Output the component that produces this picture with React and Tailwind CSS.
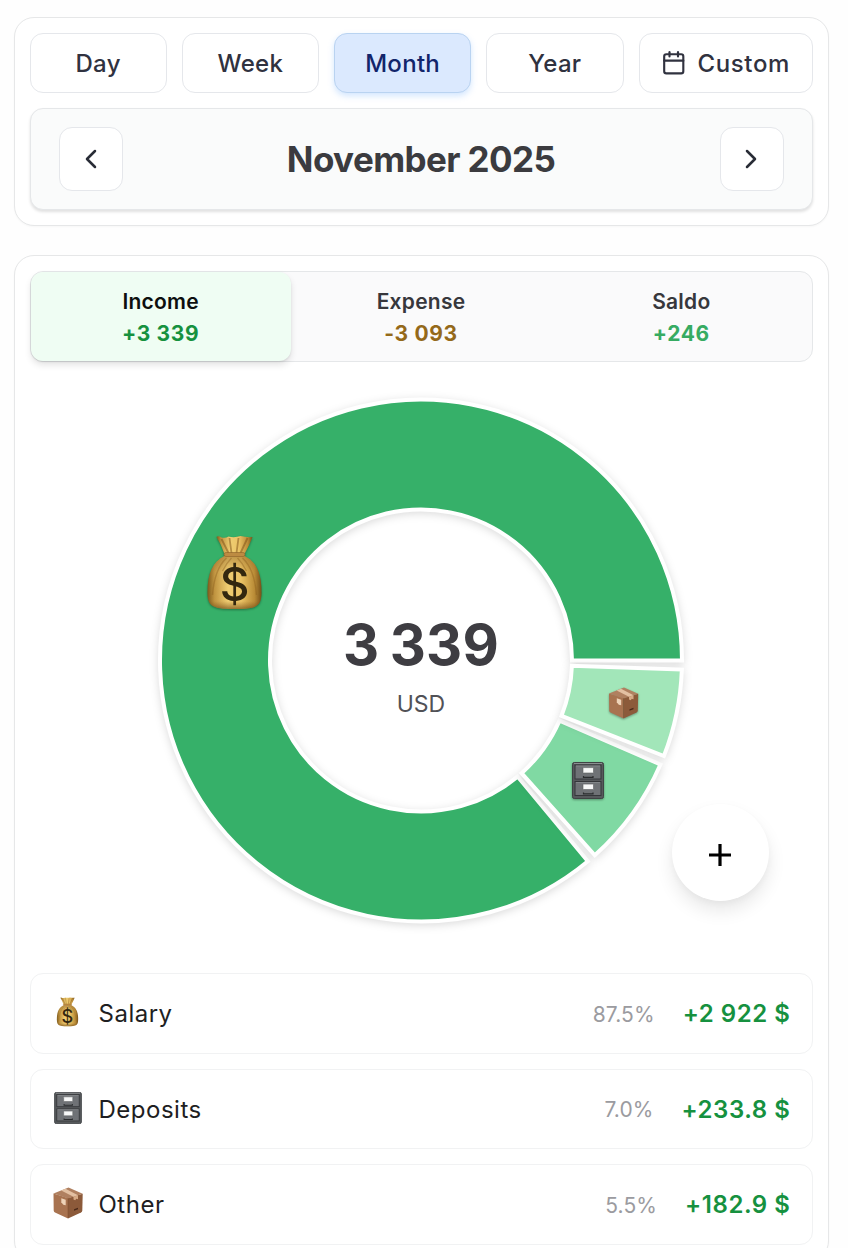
import { useState } from "react";
import { Calendar, ChevronLeft, ChevronRight } from "lucide-react";

const periods = ["Day", "Week", "Month", "Year"];

const totals = [
    { id: "income", label: "Income", value: "+3 339", color: "text-[#16913f]" },
    { id: "expense", label: "Expense", value: "-3 093", color: "text-[#94691a]" },
    { id: "saldo", label: "Saldo", value: "+246", color: "text-[#36ab62]" },
];

const categories = [
    { name: "Salary", icon: "bag", share: 87.5, amount: "+2 922 $", fill: "#36b069" },
    { name: "Deposits", icon: "cabinet", share: 7.0, amount: "+233.8 $", fill: "#80d9a3" },
    { name: "Other", icon: "box", share: 5.5, amount: "+182.9 $", fill: "#a2e6b9" },
];

function MoneyBag(props) {
    return (
        <svg viewBox="0 0 56 76" {...props}>
            <defs>
                <linearGradient id="bagBody" x1="0" x2="1" y1="0" y2="0">
                    <stop offset="0" stopColor="#7d5a1c" />
                    <stop offset="0.13" stopColor="#c09440" />
                    <stop offset="0.38" stopColor="#efcd72" />
                    <stop offset="0.62" stopColor="#ebc365" />
                    <stop offset="0.87" stopColor="#b98b36" />
                    <stop offset="1" stopColor="#765018" />
                </linearGradient>
                <linearGradient id="bagShade" x1="0" x2="0" y1="0" y2="1">
                    <stop offset="0" stopColor="#7a4a12" stopOpacity="0.4" />
                    <stop offset="0.3" stopColor="#7a4a12" stopOpacity="0" />
                    <stop offset="0.85" stopColor="#7a4a12" stopOpacity="0" />
                    <stop offset="1" stopColor="#5c370b" stopOpacity="0.6" />
                </linearGradient>
            </defs>
            <path d="M10 2Q12 0.5 15 2.5Q19 3.5 22 1.5Q28 3 34 1Q40 2.5 46 2Q43 10 38 19H18Q15 10 10 2Z" fill="url(#bagBody)" />
            <path d="M15 4L22 18M23 3L25 18M32 3L30 18M41 3L34 18" stroke="#7b4d16" strokeWidth="1.8" opacity="0.5" fill="none" />
            <path d="M18 21C6 27 1 38 1 57C1 71 5 74 28 74C51 74 55 71 55 57C55 38 50 27 38 21Z" fill="url(#bagBody)" />
            <path d="M18 21C6 27 1 38 1 57C1 71 5 74 28 74C51 74 55 71 55 57C55 38 50 27 38 21Z" fill="url(#bagShade)" />
            <path d="M20 23Q8 34 6 60M25 23Q20 28 16 36M31 23Q36 28 40 36M36 23Q48 34 50 60" stroke="#8a5c1b" strokeWidth="1.4" opacity="0.4" fill="none" />
            <rect x="17.5" y="17.5" width="21" height="4" rx="2" fill="#bd8b42" stroke="#8c6028" strokeWidth="0.6" />
            <text x="28" y="65.5" textAnchor="middle" fontSize="46" fontWeight="500" fontFamily="Inter, sans-serif" fill="#33270f">$</text>
        </svg>
    );
}

function Cabinet(props) {
    return (
        <svg viewBox="0 0 32 37" {...props}>
            <rect x="0.5" y="0.5" width="31" height="36" rx="1.8" fill="#56595c" stroke="#404345" />
            <path d="M2 1.5H30" stroke="#8b8e90" strokeWidth="1" />
            {[3, 19.5].map((y) => (
                <g key={y} transform={`translate(3 ${y})`}>
                    <rect width="26" height="14" fill="#6f7276" stroke="#35373a" strokeWidth="1" />
                    <path d="M1 1H25" stroke="#888b8e" strokeWidth="0.8" />
                    <rect x="8" y="2.6" width="10.5" height="5.4" rx="0.6" fill="#f7f8f8" stroke="#5c5e60" strokeWidth="0.6" />
                    <path d="M8.5 11V12.3H18V11" stroke="#2a2c2e" strokeWidth="1.2" fill="none" />
                </g>
            ))}
        </svg>
    );
}

function Package(props) {
    return (
        <svg viewBox="0 0 30 32" {...props}>
            <path d="M0.5 6.5L15 11V31.5L2 25.5Q0.8 25 0.7 23.5Z" fill="#a87350" />
            <path d="M15 11L29.7 6.8L29.3 23.5Q29.2 25 28 25.6L15 31.5Z" fill="#8c5a3a" />
            <path d="M0.5 6.5L15.5 0.5L29.7 6.8L15 11.5Z" fill="#b08060" />
            <path d="M8.2 3.4L12.5 1.7L25 8.2L20.5 9.8Z" fill="#e3c0a2" />
            <path d="M20.5 9.8L25 8.2V12.3L23.3 11.8L22.2 13.2L20.5 12.6Z" fill="#d6aa86" />
            <path d="M15 11.3V31" stroke="#7a4a2a" strokeWidth="0.5" />
            <path d="M8.3 11.3L12.7 12.8V18.2L10.3 17.7L8.3 15.2Z" fill="#eed3b8" />
            <path d="M21 22.3L25 20.8V22.2L21 23.8Z" fill="#492818" />
        </svg>
    );
}

const icons = { bag: MoneyBag, cabinet: Cabinet, box: Package };

const CX = 391;
const CY = 298.5;
const OUTER = 261;
const INNER = 151;
const PAD = 2;

function point(radius, angle) {
    const rad = (angle * Math.PI) / 180;
    return `${CX + radius * Math.cos(rad)} ${CY - radius * Math.sin(rad)}`;
}

function slicePath(start, end) {
    const large = end - start > 180 ? 1 : 0;
    return `M${point(OUTER, start)}A${OUTER} ${OUTER} 0 ${large} 0 ${point(OUTER, end)}L${point(INNER, end)}A${INNER} ${INNER} 0 ${large} 1 ${point(INNER, start)}Z`;
}

function DonutChart() {
    const sweep = 360 - PAD * categories.length;
    let angle = 0;
    const slices = categories.map((c) => {
        const start = angle;
        const end = start + (sweep * c.share) / 100;
        angle = end + PAD;
        return { ...c, d: slicePath(start, end) };
    });

    return (
        <div className="relative h-[611px]">
            <svg width="783" height="611" viewBox="0 0 783 611" className="block">
                {slices.map((s) => (
                    <path key={s.name} d={s.d} fill={s.fill} stroke="#fff" strokeWidth="4" className="drop-shadow-[0_2px_4px_rgba(0,0,0,0.14)]" />
                ))}
                <MoneyBag x="176.5" y="173" width="56" height="76" className="drop-shadow-[0_1px_1px_rgba(0,0,0,0.35)]" />
                <Package x="578.5" y="325" width="30" height="32" className="drop-shadow-[0_1px_1px_rgba(0,0,0,0.35)]" />
                <Cabinet x="542" y="400" width="32" height="37" className="drop-shadow-[0_1px_1px_rgba(0,0,0,0.35)]" />
            </svg>
            <div className="absolute inset-x-0 top-[248px] flex flex-col items-center">
                <span className="text-[56px] leading-[70px] font-bold tracking-[0.2px] text-[#3e3d42] [word-spacing:-3px]">3 339</span>
                <span className="mt-[7px] text-[23px] leading-[34px] text-[#515156]">USD</span>
            </div>
            <button className="absolute top-[442px] left-[642px] flex size-[97px] items-center justify-center rounded-full bg-white shadow-[0_10px_18px_rgba(0,0,0,0.09),0_3px_6px_rgba(0,0,0,0.03)]">
                <svg width="22" height="22" viewBox="0 0 22 22" className="mt-[5px]">
                    <path d="M11 0V22M0 11H22" stroke="#000" strokeWidth="3.2" />
                </svg>
            </button>
        </div>
    );
}

export default function App() {
    const [period, setPeriod] = useState("Month");
    const [tab, setTab] = useState("income");

    return (
        <div className="flex h-[1248px] w-[848px] flex-col gap-[29px] overflow-hidden bg-[#fefefe] pt-[17px] pr-[19.5px] pl-[13.5px] font-['Inter',sans-serif]">
            <section className="flex shrink-0 flex-col gap-[15px] rounded-[20px] border border-[#e6e7e8] bg-white p-[15px] shadow-[0_1px_2px_rgba(0,0,0,0.03)]">
                <div className="flex gap-[15px]">
                    {periods.map((p) => (
                        <button
                            key={p}
                            onClick={() => setPeriod(p)}
                            className={
                                p === period
                                    ? "h-[60px] flex-1 rounded-[13px] border border-[#b9d3f1] bg-[#dbe9fe] pt-0.5 text-[24px] font-medium tracking-[0.3px] text-[#12256b] shadow-[0_3px_6px_rgba(96,165,250,0.28)]"
                                    : "h-[60px] flex-1 rounded-[13px] border border-[#e5e7eb] bg-white pt-0.5 text-[24px] font-medium tracking-[0.3px] text-[#30323f]"
                            }
                        >
                            {p}
                        </button>
                    ))}
                    <button className="flex h-[60px] w-[174px] items-center justify-center gap-[11px] rounded-[13px] border border-[#e5e7eb] bg-white text-[24px] font-medium tracking-[0.6px] text-[#30323f]">
                        <Calendar size={25.5} />
                        <span className="pt-0.5">Custom</span>
                    </button>
                </div>
                <div className="flex h-[102px] items-center justify-between rounded-[13px] border border-[#e5e7e9] bg-[#fafbfb] px-7 shadow-[0_2px_3px_rgba(0,0,0,0.12)]">
                    <button className="flex size-16 items-center justify-center rounded-[13px] border border-[#e5e7eb] bg-white text-[#292c36]">
                        <ChevronLeft size={32} strokeWidth={1.9} className="-mt-px" />
                    </button>
                    <h1 className="text-[35px] font-bold tracking-[-0.6px] text-[#3b3b3f]">November 2025</h1>
                    <button className="flex size-16 items-center justify-center rounded-[13px] border border-[#e5e7eb] bg-white text-[#292c36]">
                        <ChevronRight size={32} strokeWidth={1.9} className="-mt-px mr-px" />
                    </button>
                </div>
            </section>

            <section className="shrink-0 rounded-[20px] border border-[#e6e7e8] bg-white p-[15px] shadow-[0_1px_2px_rgba(0,0,0,0.03)]">
                <div className="flex h-[91px] rounded-[13px] border border-[#e5e7e9] bg-[#fafafb]">
                    {totals.map((t) => (
                        <button
                            key={t.id}
                            onClick={() => setTab(t.id)}
                            className={
                                t.id === tab
                                    ? "flex flex-1 flex-col items-center justify-center rounded-xl bg-[#effdf3] pt-0.5 text-[#0c0f0e] shadow-[0_4px_7px_rgba(0,0,0,0.11),0_1px_2px_rgba(0,0,0,0.08)]"
                                    : "flex flex-1 flex-col items-center justify-center pt-0.5 text-[#37373c]"
                            }
                        >
                            <span className="text-[21px] leading-8 font-semibold tracking-[0.25px]">{t.label}</span>
                            <span className={`text-[21px] leading-8 font-bold tracking-[0.65px] ${t.color}`}>{t.value}</span>
                        </button>
                    ))}
                </div>

                <DonutChart />

                <ul className="flex flex-col gap-[15px]">
                    {categories.map((c) => {
                        const Icon = icons[c.icon];
                        return (
                            <li key={c.name} className="flex h-[80.5px] items-center rounded-[13px] border border-[#f1f2f3] bg-white px-[22px]">
                                <div className="flex w-[30px] justify-center">
                                    <Icon className={c.icon === "bag" ? "-mt-0.5 h-[30px] w-[23px]" : "-mt-0.5 h-8 w-[30px]"} />
                                </div>
                                <span className="ml-4 pt-0.5 text-[24px] tracking-[0.5px] text-[#1e1e22]">{c.name}</span>
                                <div className="ml-auto flex items-center gap-[28px] pt-0.5">
                                    <span className="text-[21px] tracking-[0.1px] text-[#9b9ba0]">{c.share.toFixed(1)}%</span>
                                    <span className="-mr-px text-[24px] font-semibold tracking-[0.55px] text-[#16913f]">{c.amount}</span>
                                </div>
                            </li>
                        );
                    })}
                </ul>
            </section>
        </div>
    );
}
